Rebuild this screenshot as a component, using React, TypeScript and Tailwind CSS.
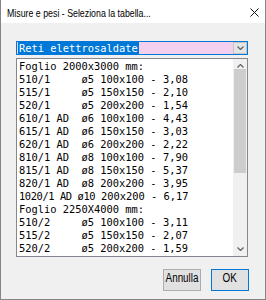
import React from "react";

const rows: string[] = [
  "Foglio 2000x3000 mm:",
  "510/1     ø5 100x100 - 3,08",
  "515/1     ø5 150x150 - 2,10",
  "520/1     ø5 200x200 - 1,54",
  "610/1 AD  ø6 100x100 - 4,43",
  "615/1 AD  ø6 150x150 - 3,03",
  "620/1 AD  ø6 200x200 - 2,22",
  "810/1 AD  ø8 100x100 - 7,90",
  "815/1 AD  ø8 150x150 - 5,37",
  "820/1 AD  ø8 200x200 - 3,95",
  "SPECIAL",
  "Foglio 2250X4000 mm:",
  "510/2     ø5 100x100 - 3,11",
  "515/2     ø5 150x150 - 2,07",
  "520/2     ø5 200x200 - 1,59",
];

function Chevron({ up }: { up?: boolean }) {
  return (
    <svg width="7" height="4" viewBox="0 0 7 4" className="block">
      {up ? (
        <path d="M0.5 3.5 L3.5 0.5 L6.5 3.5" fill="none" stroke="#606060" strokeWidth="1.2" />
      ) : (
        <path d="M0.5 0.5 L3.5 3.5 L6.5 0.5" fill="none" stroke="#606060" strokeWidth="1.2" />
      )}
    </svg>
  );
}

export default function App() {
  return (
    <div className="w-[266px] h-[300px] flex flex-col bg-[#f0f0f0] border-x border-b border-[#858585] overflow-hidden">
      {/* title bar */}
      <div className="h-[23px] bg-white flex items-start justify-between pl-[6px] pr-[6px] shrink-0">
        <span className="mt-[7px] leading-[13px] text-[11px] text-black font-['Liberation_Sans',sans-serif] whitespace-nowrap scale-x-[0.8] origin-left">
          Misure e pesi - Seleziona la tabella...
        </span>
        <svg width="9" height="9" viewBox="0 0 9 9" className="mt-[8px] block">
          <path d="M0.5 0.5 L8.5 8.5 M8.5 0.5 L0.5 8.5" stroke="#111" strokeWidth="1" fill="none" />
        </svg>
      </div>

      {/* body */}
      <div className="flex-1 flex flex-col pl-[15px] pr-[17px] pt-[18px] font-['DejaVu_Sans_Mono',monospace] text-[10.4px] text-black">
        {/* combo */}
        <div className="h-[14px] border border-[#0078d7] bg-[#f5d0ee] flex shrink-0">
          <div className="flex-1 pl-[1px] flex">
            <span className="bg-[#0078d7] text-white px-[1px] leading-[12px] whitespace-pre">Reti elettrosaldate</span>
          </div>
          <div className="w-[14px] bg-[#e5e5e5] border border-[#c4c4c4] flex items-center justify-center">
            <Chevron />
          </div>
        </div>

        {/* list */}
        <div className="mt-[3px] h-[199px] border border-[#828790] bg-white flex shrink-0">
          <div className="flex-1 overflow-hidden pl-[2px] pt-[1px]">
            {rows.map((r, i) =>
              r === "SPECIAL" ? (
                <div key={i} className="h-[13px] leading-[13px] whitespace-pre">
                  <span className="tracking-[-0.4px]">1020/1 AD ø10 </span>
                  <span>200x200 - 6,17</span>
                </div>
              ) : (
                <div key={i} className="h-[13px] leading-[13px] whitespace-pre">
                  {r}
                </div>
              )
            )}
          </div>
          <div className="w-[14px] bg-[#f0f0f0] flex flex-col">
            <div className="h-[10px] flex items-start justify-center pt-[5px]">
              <Chevron up />
            </div>
            <div className="h-[104px] mx-[1px] bg-[#cdcdcd]" />
            <div className="flex-1" />
            <div className="h-[12px] flex items-start justify-center pt-[3px]">
              <Chevron />
            </div>
          </div>
        </div>

        {/* buttons */}
        <div className="mt-[12px] flex justify-end gap-[10px] -mr-px font-['Liberation_Sans',sans-serif] text-[12px]">
          <button className="w-[38px] h-[22px] border border-[#adadad] bg-[#e1e1e1] flex items-start justify-center pt-[1px] leading-[14px] text-black">
            <span className="block scale-x-[0.82] whitespace-nowrap">Annulla</span>
          </button>
          <button className="w-[38px] h-[22px] border border-[#0078d7] bg-[#e1e1e1] flex items-start justify-center pt-[1px] leading-[14px] text-black">
            <span className="block scale-x-[0.82] whitespace-nowrap">OK</span>
          </button>
        </div>
      </div>
    </div>
  );
}
